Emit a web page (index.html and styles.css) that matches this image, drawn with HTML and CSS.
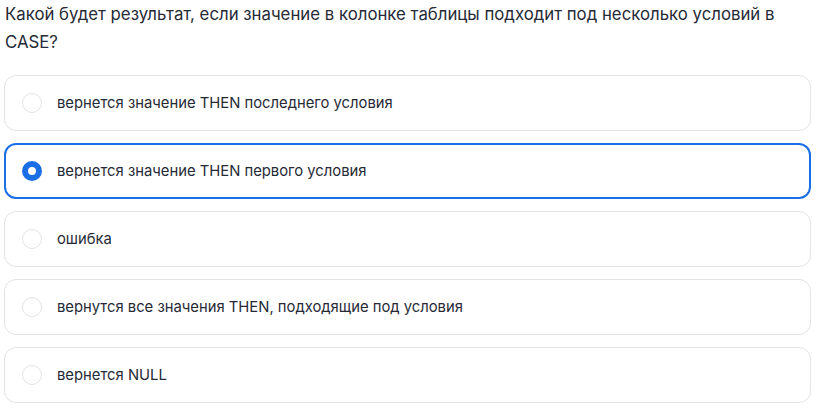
FILE: index.html
```html
<!DOCTYPE html>
<html lang="ru">
<head>
<meta charset="utf-8">
<link rel="stylesheet" href="styles.css">
</head>
<body>
<div class="quiz">
  <p class="question">Какой будет результат, если значение в колонке таблицы подходит под несколько условий в CASE?</p>
  <div class="options">
    <label class="option"><span class="radio"></span><span class="text">вернется значение THEN последнего условия</span></label>
    <label class="option selected"><span class="radio"></span><span class="text">вернется значение THEN первого условия</span></label>
    <label class="option"><span class="radio"></span><span class="text">ошибка</span></label>
    <label class="option"><span class="radio"></span><span class="text">вернутся все значения THEN, подходящие под условия</span></label>
    <label class="option"><span class="radio"></span><span class="text">вернется NULL</span></label>
  </div>
</div>
</body>
</html>
```
FILE: styles.css
```css
html, body {
  margin: 0;
  padding: 0;
  background: #ffffff;
}
body {
  font-family: Inter, "Noto Sans", sans-serif;
  color: #262a36;
}
.quiz {
  padding: 0 7px 0 4px;
}
.question {
  margin: 0 0 19px 1px;
  font-size: 16.8px;
  line-height: 28px;
  color: #262a36;
}
.options {
  display: flex;
  flex-direction: column;
  gap: 12px;
}
.option {
  display: flex;
  align-items: center;
  height: 56px;
  box-sizing: border-box;
  border: 1px solid #e3e3e6;
  border-radius: 12px;
  padding-left: 17px;
  gap: 15px;
}
.option.selected {
  border: 2px solid #1a6fe6;
  padding-left: 16px;
}
.radio {
  width: 20px;
  height: 20px;
  box-sizing: border-box;
  border: 1px solid #e3e3e6;
  border-radius: 50%;
  flex: none;
}
.option.selected .radio {
  border: 6px solid #1a6fe6;
}
.text {
  font-size: 14.8px;
  color: #262a36;
}
```
